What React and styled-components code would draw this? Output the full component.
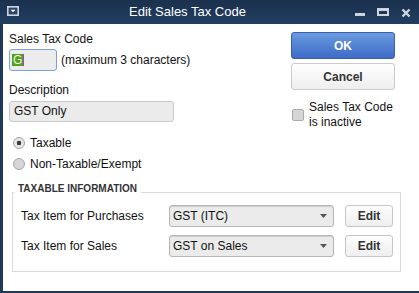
import React from "react";
import styled, { createGlobalStyle } from "styled-components";

const GlobalStyle = createGlobalStyle`
  html, body {
    margin: 0;
    padding: 0;
    background: #fff;
  }
  body {
    font-family: "Liberation Sans", Arial, sans-serif;
    font-size: 12px;
    color: #111;
  }
  * {
    box-sizing: border-box;
  }
`;

const Window = styled.div`
  width: 419px;
  height: 293px;
  display: flex;
  flex-direction: column;
  background: #fff;
  overflow: hidden;
`;

const TitleBar = styled.div`
  height: 24px;
  flex: none;
  display: flex;
  align-items: stretch;
  padding: 0 8px 0 6px;
  background: linear-gradient(#1b314e, #213d61);
  color: #fff;
`;

const Title = styled.div`
  flex: 1;
  text-align: center;
  font-size: 13px;
  line-height: 24px;
`;

const Controls = styled.div`
  display: flex;
  gap: 12px;
`;

const Frame = styled.div`
  flex: 1;
  border-left: 3px solid #1d3a5c;
  border-bottom: 2px solid #1d3a5c;
  padding: 8px 18px 0 6px;
`;

const TopSection = styled.div`
  display: flex;
  justify-content: space-between;
  padding-right: 6px;
`;

const Column = styled.div`
  display: flex;
  flex-direction: column;
  width: ${(p) => p.width || "auto"};
`;

const Label = styled.div`
  line-height: 14px;
  margin-top: ${(p) => p.top || 0}px;
`;

const CodeRow = styled.div`
  display: flex;
  align-items: center;
  gap: 4px;
  margin-top: 3px;
`;

const CodeBox = styled.div`
  width: 48px;
  height: 22px;
  display: flex;
  align-items: center;
  padding-left: 2px;
  border: 1px solid #7aa1d8;
  border-radius: 3px;
  background: #ececec;
`;

const Selected = styled.span`
  height: 12px;
  line-height: 12px;
  padding: 0 1px;
  background: #52a01c;
  color: #eef5e8;
`;

const Caret = styled.span`
  width: 1px;
  height: 12px;
  background: #a03fd4;
`;

const TextBox = styled.div`
  width: 165px;
  height: 21px;
  margin-top: 4px;
  padding-left: 4px;
  line-height: 19px;
  border: 1px solid #c8c8c8;
  border-radius: 3px;
  background: #ebebeb;
`;

const RadioRow = styled.label`
  height: 21px;
  display: flex;
  align-items: center;
  gap: 5px;
  padding-left: 4px;
  margin-top: ${(p) => p.top || 0}px;
`;

const Radio = styled.span`
  width: 12px;
  height: 12px;
  border-radius: 50%;
  border: 1px solid #a5a5a5;
  background: ${(p) =>
    p.checked ? "radial-gradient(circle, #3c3c3c 0 2px, #e6e6e6 2.6px)" : "#d6d6d6"};
`;

const Button = styled.div`
  height: 27px;
  display: flex;
  align-items: center;
  justify-content: center;
  margin-top: ${(p) => p.top || 0}px;
  border-radius: 3px;
  font-weight: bold;
  font-size: 12px;
  border: 1px solid ${(p) => (p.primary ? "#3a60a8" : "#cacaca")};
  color: ${(p) => (p.primary ? "#fff" : "#333")};
  background: ${(p) =>
    p.primary
      ? "linear-gradient(#6a9ae0, #3d6bc7)"
      : "linear-gradient(#fefefe, #eeeeee)"};
`;

const CheckRow = styled.label`
  display: flex;
  align-items: center;
  gap: 5px;
  margin-top: 10px;
  padding-left: 1px;
  line-height: 15px;
`;

const Checkbox = styled.span`
  width: 12px;
  height: 12px;
  flex: none;
  border: 1px solid #ababab;
  border-radius: 2px;
  background: #d6d6d6;
`;

const Group = styled.fieldset`
  margin: 10px 0 0 3px;
  padding: 4px 7px 14px 8px;
  border: 1px solid #d9d9d9;
  min-width: 0;
`;

const Legend = styled.legend`
  margin-left: -7px;
  padding: 0 4px 7px;
  font-size: 10px;
  line-height: 10px;
  font-weight: bold;
  color: #333;
`;

const Rows = styled.div`
  display: grid;
  grid-template-columns: 1fr 165px 48px;
  column-gap: 11px;
  row-gap: 8px;
  align-items: center;
`;

const Select = styled.div`
  height: 22px;
  display: flex;
  align-items: center;
  justify-content: space-between;
  padding: 0 6px 0 3px;
  border: 1px solid #b6b6b6;
  border-radius: 3px;
  background: #ebebeb;
  box-shadow: inset 0 1px 1px rgba(0, 0, 0, 0.12);
`;

const EditButton = styled.div`
  height: 22px;
  display: flex;
  align-items: center;
  justify-content: center;
  border: 1px solid #c6c6c6;
  border-radius: 3px;
  background: linear-gradient(#fdfdfd, #efefef);
  font-weight: bold;
  color: #333;
`;

const iconColor = "#cfd5dd";

function MenuIcon() {
  return (
    <svg width="14" height="24">
      <rect x="1.8" y="6.8" width="10.4" height="8.4" fill="#2b4566" stroke={iconColor} strokeWidth="1.6" />
      <polygon points="4.5,9.8 9.5,9.8 7,12.3" fill="#fff" />
    </svg>
  );
}

function Minimize() {
  return (
    <svg width="10" height="24">
      <rect x="0" y="13" width="10" height="3" fill={iconColor} />
    </svg>
  );
}

function Maximize() {
  return (
    <svg width="12" height="24">
      <path d="M0 8h12v8H0z M2 11v3h8v-3z" fill={iconColor} fillRule="evenodd" />
    </svg>
  );
}

function Close() {
  return (
    <svg width="10" height="24">
      <path d="M1.5 9.5L8.5 16.5M8.5 9.5L1.5 16.5" stroke={iconColor} strokeWidth="2.4" />
    </svg>
  );
}

function Arrow() {
  return (
    <svg width="7" height="4">
      <polygon points="0,0 7,0 3.5,4" fill="#555" />
    </svg>
  );
}

const taxItems = [
  { label: "Tax Item for Purchases", value: "GST (ITC)" },
  { label: "Tax Item for Sales", value: "GST on Sales" },
];

export default function App() {
  return (
    <>
      <GlobalStyle />
      <Window>
        <TitleBar>
          <MenuIcon />
          <Title>Edit Sales Tax Code</Title>
          <Controls>
            <Minimize />
            <Maximize />
            <Close />
          </Controls>
        </TitleBar>
        <Frame>
          <TopSection>
            <Column>
              <Label>Sales Tax Code</Label>
              <CodeRow>
                <CodeBox>
                  <Selected>G</Selected>
                  <Caret />
                </CodeBox>
                <span>(maximum 3 characters)</span>
              </CodeRow>
              <Label top={12}>Description</Label>
              <TextBox>GST Only</TextBox>
              <RadioRow top={10}>
                <Radio checked />
                Taxable
              </RadioRow>
              <RadioRow>
                <Radio />
                Non-Taxable/Exempt
              </RadioRow>
            </Column>
            <Column width="104px">
              <Button primary>OK</Button>
              <Button top={4}>Cancel</Button>
              <CheckRow>
                <Checkbox />
                <span>
                  Sales Tax Code
                  <br />
                  is inactive
                </span>
              </CheckRow>
            </Column>
          </TopSection>
          <Group>
            <Legend>TAXABLE INFORMATION</Legend>
            <Rows>
              {taxItems.map((item) => (
                <React.Fragment key={item.label}>
                  <span>{item.label}</span>
                  <Select>
                    <span>{item.value}</span>
                    <Arrow />
                  </Select>
                  <EditButton>Edit</EditButton>
                </React.Fragment>
              ))}
            </Rows>
          </Group>
        </Frame>
      </Window>
    </>
  );
}
